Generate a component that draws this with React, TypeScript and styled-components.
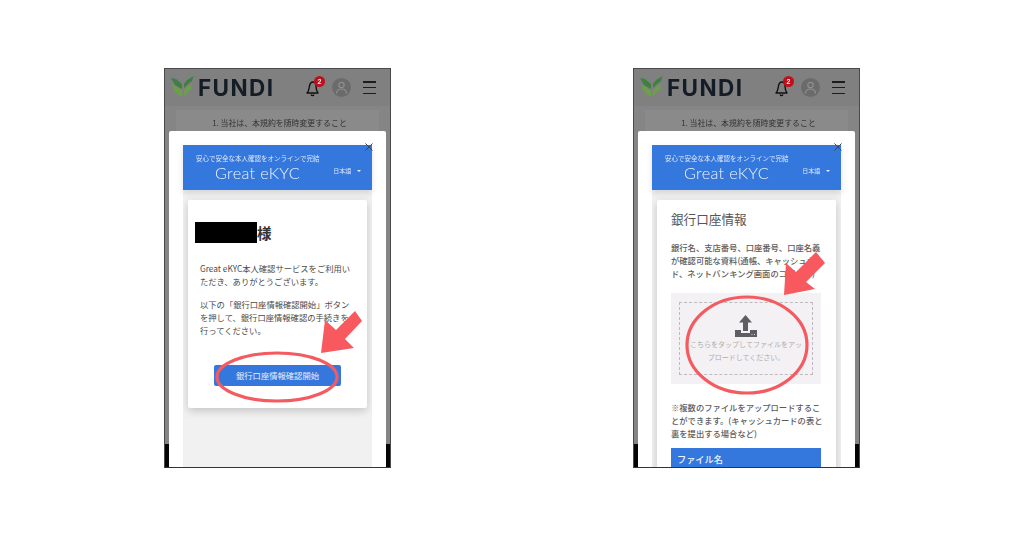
import React from "react";
import styled, { createGlobalStyle } from "styled-components";

const Global = createGlobalStyle`
  html, body { margin: 0; padding: 0; background: #fff; }
  body { font-family: "Noto Sans CJK JP", "Noto Sans", sans-serif; }
`;

const Page = styled.div`
  width: 1024px;
  height: 536px;
  box-sizing: border-box;
  padding: 68px 0 0 164px;
  display: flex;
  align-items: flex-start;
  gap: 242px;
  background: #fff;
  overflow: hidden;
`;

const Phone = styled.div`
  position: relative;
  width: 227px;
  height: 400px;
  box-sizing: border-box;
  border: 1px solid #4a4a4a;
  border-bottom-color: #333;
  background: #858585;
  overflow: hidden;
  flex: none;
`;

const Screen = styled.div`
  display: flex;
  flex-direction: column;
  height: 100%;
  filter: blur(0.6px);
`;

const TopBar = styled.header`
  height: 37px;
  flex: none;
  display: flex;
  align-items: center;
  padding: 0 14px 0 6px;
  background: #808080;
`;

const Brand = styled.div`
  display: flex;
  align-items: center;
  gap: 4px;
  flex: 1;
`;

const BrandName = styled.span`
  font-family: "Inter", "Liberation Sans", sans-serif;
  font-weight: 700;
  font-size: 22.5px;
  letter-spacing: 1.4px;
  color: #141d25;
  line-height: 22px;
`;

const BellWrap = styled.div`
  position: relative;
  width: 14px;
  height: 20px;
  margin-right: 12px;
  display: flex;
  align-items: center;
`;

const Badge = styled.span`
  position: absolute;
  top: -2px;
  left: 8px;
  width: 11px;
  height: 11px;
  border-radius: 50%;
  background: #bd101c;
  color: #eee;
  font: 700 7px/11px "Liberation Sans", sans-serif;
  text-align: center;
`;

const Avatar = styled.div`
  width: 19px;
  height: 19px;
  border-radius: 50%;
  background: #6b6b6b;
  margin-right: 12px;
  display: flex;
  align-items: center;
  justify-content: center;
`;

const Burger = styled.div`
  width: 13px;
  height: 13px;
  display: flex;
  flex-direction: column;
  justify-content: space-between;
  & > i {
    display: block;
    height: 1.5px;
    background: #1c1c1c;
  }
`;

const ClauseRow = styled.div`
  height: 25px;
  margin: 4px 11px 0;
  padding-left: 4px;
  background: #8a8a8a;
  text-align: center;
  font-size: 7.9px;
  line-height: 25px;
  color: #333;
  white-space: nowrap;
`;

const Spacer = styled.div`
  flex: 1;
  display: flex;
  align-items: flex-end;
  justify-content: space-between;
`;

const Edge = styled.div`
  width: 4px;
  height: 23px;
  background: #050505;
`;

const Modal = styled.div`
  position: absolute;
  left: 4px;
  right: 4px;
  top: 62px;
  bottom: 0;
  background: #fff;
  border-radius: 2px 2px 0 0;
  padding: 14px 14px 0;
  display: flex;
  flex-direction: column;
`;

const ModalContent = styled.div`
  flex: 1;
  min-height: 0;
  display: flex;
  flex-direction: column;
  filter: blur(0.5px);
`;

const Close = styled.span`
  position: absolute;
  top: 12px;
  right: 13px;
  width: 8px;
  height: 8px;
  display: flex;
  z-index: 2;
`;

const Banner = styled.div`
  height: 45px;
  flex: none;
  position: relative;
  background: #3578dd;
  color: #fff;
  box-shadow: 0 3px 6px rgba(0, 0, 0, 0.12);
  z-index: 1;
`;

const Tagline = styled.div`
  padding: 9px 0 0 13px;
  font-size: 6.5px;
  line-height: 9px;
  color: #dce8fa;
  white-space: nowrap;
`;

const BannerRow = styled.div`
  display: flex;
  align-items: center;
`;

const ProductName = styled.div`
  margin-left: 32px;
  font-family: "Lato", "Liberation Sans", sans-serif;
  font-weight: 300;
  font-size: 16.3px;
  line-height: 20px;
  letter-spacing: 0.3px;
  color: #eef4fd;
`;

const Lang = styled.div`
  margin-left: 33px;
  font-size: 6px;
  line-height: 10px;
  margin-top: -5px;
  color: #dce8fa;
  display: flex;
  align-items: center;
  gap: 6px;
  &::after {
    content: "";
    border-left: 2px solid transparent;
    border-right: 2px solid transparent;
    border-top: 2.5px solid #eef4fd;
  }
`;

const ModalBody = styled.div`
  flex: 1;
  min-height: 0;
  background: #f1f1f1;
  padding: 10px 5px 0;
  overflow: hidden;
`;

const WelcomeCard = styled.div`
  height: 208px;
  box-sizing: border-box;
  background: #fff;
  border-radius: 2px;
  box-shadow: 0 3px 9px rgba(0, 0, 0, 0.18);
  padding: 22px 7px 0;
`;

const UploadCard = styled.div`
  background: #fff;
  border-radius: 2px;
  box-shadow: 0 3px 9px rgba(0, 0, 0, 0.18);
  padding: 10px 0 0 14px;
`;

const Greeting = styled.div`
  display: flex;
  align-items: center;
  height: 21px;
  margin-bottom: 19px;
  font-size: 14.5px;
  font-weight: 700;
  color: #333;
`;

const Redacted = styled.span`
  width: 62px;
  height: 21px;
  background: #000;
`;

const Copy = styled.p`
  margin: 0 0 10px 5px;
  width: 152px;
  font-size: 8.3px;
  line-height: 13px;
  color: #4a4a4a;
`;

const StartButton = styled.div`
  width: 127px;
  height: 21px;
  margin: 28px 0 0 19px;
  background: #3578dd;
  border-radius: 2px;
  color: #e6effc;
  font-size: 8.3px;
  line-height: 21px;
  text-align: center;
`;

const Title = styled.h2`
  margin: 0 0 13px;
  font-size: 12.6px;
  line-height: 18px;
  font-weight: 400;
  color: #555;
`;

const Note = styled.p`
  margin: 0;
  width: 153px;
  font-size: 8.3px;
  line-height: 13px;
  font-weight: 500;
  color: #5c5c5c;
`;

const DropZone = styled.div`
  margin: 13px 0 17px;
  width: 150px;
  height: 91px;
  box-sizing: border-box;
  padding: 9px 8px;
  background: #f3f1f4;
`;

const Dashed = styled.div`
  height: 100%;
  box-sizing: border-box;
  border: 1px dashed #bdbbbd;
  display: flex;
  flex-direction: column;
  align-items: center;
  padding: 12px 8px 0;
  & > svg {
    flex: none;
  }
`;

const DropText = styled.div`
  margin-top: 1px;
  font-size: 7px;
  line-height: 13px;
  color: #aeaeae;
  text-align: center;
`;

const FileHead = styled.div`
  margin-top: 8px;
  width: 150px;
  height: 22px;
  padding-left: 6px;
  box-sizing: border-box;
  background: #3578dd;
  color: #eef4fd;
  font-size: 9.2px;
  font-weight: 500;
  line-height: 22px;
`;

const Markup = styled.svg`
  position: absolute;
  left: -1px;
  top: -1px;
  width: 227px;
  height: 400px;
  pointer-events: none;
`;

const Leaf = () => (
  <svg width="23" height="23" viewBox="0 0 23 23">
    <path d="M0 2 L5 3 L11 8 L11 13 L4 9 Z" fill="#3f7f44" />
    <path d="M1 9 L6 11 L11 15 L11 21 L4 16 Z" fill="#6b9f48" />
    <path d="M13 12 L13 8 L16 4 L22.5 0 L21 5 L17 8 Z" fill="#3f7f44" />
    <path d="M13 21 L13 15 L16 11 L21.5 8 L20 13 L16 17 Z" fill="#6b9f48" />
  </svg>
);

const BellIcon = () => (
  <svg width="13" height="18" viewBox="0 0 13 18" fill="none" stroke="#111" strokeWidth="1.4">
    <path d="M1 14 C3 12 3 9 3.5 7 C4 4 6 3 7 3 C9 3 10 5 10 7 C10 10 10.5 12 12 14 Z" strokeLinejoin="round" />
    <path d="M5.2 15.5 C5.5 17 7.5 17 7.8 15.5" />
  </svg>
);

const PersonIcon = () => (
  <svg width="13" height="13" viewBox="0 0 13 13" fill="none" stroke="#8f8f8f" strokeWidth="1.2">
    <circle cx="6.5" cy="4" r="2.7" />
    <path d="M1.5 12.5 C1.5 9 4 8 6.5 8 C9 8 11.5 9 11.5 12.5" />
  </svg>
);

const UploadIcon = () => (
  <svg width="24" height="22" viewBox="0 0 24 22">
    <path d="M11.5 0 L18 7.5 L14 7.5 L14 16 L9 16 L9 7.5 L5 7.5 Z" fill="#5d5d62" />
    <path d="M1 15 L7 15 L7 18 L16 18 L16 15 L23 15 L23 22 L1 22 Z" fill="#5d5d62" />
    <path d="M17.5 19.5 H18.5 M20 19.5 H21" stroke="#d0d0d4" strokeWidth="1" />
  </svg>
);

const Shell = ({ children, markup }: { children: React.ReactNode; markup: React.ReactNode }) => (
  <Phone>
    <Screen>
      <TopBar>
        <Brand>
          <Leaf />
          <BrandName>FUNDI</BrandName>
        </Brand>
        <BellWrap>
          <BellIcon />
          <Badge>2</Badge>
        </BellWrap>
        <Avatar>
          <PersonIcon />
        </Avatar>
        <Burger>
          <i />
          <i />
          <i />
        </Burger>
      </TopBar>
      <ClauseRow>1. 当社は、本規約を随時変更すること</ClauseRow>
      <Spacer>
        <Edge />
        <Edge />
      </Spacer>
    </Screen>
    <Modal>
      <ModalContent>
        <Banner>
          <Tagline>安心で安全な本人確認をオンラインで完結</Tagline>
          <BannerRow>
            <ProductName>Great eKYC</ProductName>
            <Lang>日本語</Lang>
          </BannerRow>
        </Banner>
        <ModalBody>{children}</ModalBody>
      </ModalContent>
      <Close>
        <svg width="8" height="8" viewBox="0 0 8 8" stroke="#3c4656" strokeWidth="1">
          <path d="M0.5 0.5 L7.5 7.5 M7.5 0.5 L0.5 7.5" />
        </svg>
      </Close>
    </Modal>
    <Markup viewBox="0 0 227 400">{markup}</Markup>
  </Phone>
);

export default function App() {
  return (
    <Page>
      <Global />
      <Shell
        markup={
          <>
            <ellipse cx="113" cy="309" rx="60" ry="24" fill="none" stroke="#f45b60" strokeWidth="3.2" />
            <polygon points="157,285 161,252 172,262 191,243 198,253 181,271 190,280" fill="#f7595e" />
          </>
        }
      >
        <WelcomeCard>
          <Greeting>
            <Redacted />様
          </Greeting>
          <Copy>Great eKYC本人確認サービスをご利用いただき、ありがとうございます。</Copy>
          <Copy>以下の「銀行口座情報確認開始」ボタンを押して、銀行口座情報確認の手続きを行ってください。</Copy>
          <StartButton>銀行口座情報確認開始</StartButton>
        </WelcomeCard>
      </Shell>
      <Shell
        markup={
          <>
            <ellipse cx="114" cy="277" rx="60" ry="48" fill="none" stroke="#f45b60" strokeWidth="3.2" />
            <polygon points="151,227 153,195 163,204 183,184 192,195 173,214 182,221" fill="#f7595e" />
          </>
        }
      >
        <UploadCard>
          <Title>銀行口座情報</Title>
          <Note>銀行名、支店番号、口座番号、口座名義が確認可能な資料(通帳、キャッシュカード、ネットバンキング画面のコピー等)</Note>
          <DropZone>
            <Dashed>
              <UploadIcon />
              <DropText>こちらをタップしてファイルをアップロードしてください。</DropText>
            </Dashed>
          </DropZone>
          <Note>※複数のファイルをアップロードすることができます。(キャッシュカードの表と裏を提出する場合など)</Note>
          <FileHead>ファイル名</FileHead>
        </UploadCard>
      </Shell>
    </Page>
  );
}
